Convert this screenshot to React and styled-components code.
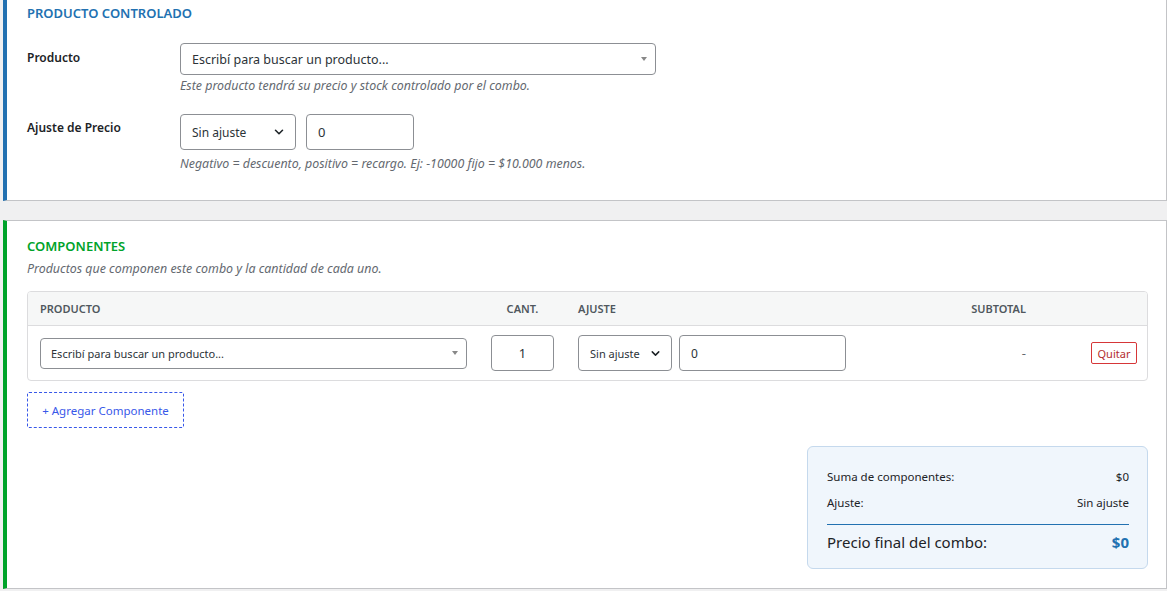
import React from "react";
import styled, { createGlobalStyle } from "styled-components";

const GlobalStyle = createGlobalStyle`
  body {
    margin: 0;
    background: #f0f0f1;
    font-family: "Segoe UI", "Noto Sans", "Open Sans", sans-serif;
    font-size: 13px;
    color: #1d2327;
  }
`;

const Chevron = ({ size = 14 }) => (
  <svg width={size} height={size} viewBox="0 0 16 16" fill="none">
    <path d="M4 6l4 4 4-4" stroke="#1d2327" strokeWidth="1.8" strokeLinecap="round" strokeLinejoin="round" />
  </svg>
);

const App = () => {
  return (
    <>
      <GlobalStyle />
      <StPage>
        <StPanel $accent="#2271b1" $top>
          <StTitle $color="#2271b1">Producto Controlado</StTitle>

          <StFormRow $mt={21}>
            <StLabel $pt={6}>Producto</StLabel>
            <StField>
              <StSearchBox $width={476} $height={32} $size={12.5}>
                <span>Escribí para buscar un producto...</span>
                <StTriangle />
              </StSearchBox>
              <StHelp $mt={2}>Este producto tendrá su precio y stock controlado por el combo.</StHelp>
            </StField>
          </StFormRow>

          <StFormRow $mt={19}>
            <StLabel $pt={5}>Ajuste de Precio</StLabel>
            <StField>
              <StInline>
                <StSelect $width={116} $height={36} $size={12}>
                  <span>Sin ajuste</span>
                  <Chevron />
                </StSelect>
                <StInput $width={108} $height={36}>0</StInput>
              </StInline>
              <StHelp $mt={5}>Negativo = descuento, positivo = recargo. Ej: -10000 fijo = $10.000 menos.</StHelp>
            </StField>
          </StFormRow>
        </StPanel>

        <StPanel $accent="#00a32a">
          <StTitle $color="#00a32a">Componentes</StTitle>
          <StHelp $mt={5}>Productos que componen este combo y la cantidad de cada uno.</StHelp>

          <StTable>
            <StHeadRow>
              <StHeadCell>Producto</StHeadCell>
              <StHeadCell $align="center">Cant.</StHeadCell>
              <StHeadCell>Ajuste</StHeadCell>
              <StHeadCell $align="right">Subtotal</StHeadCell>
              <StHeadCell />
            </StHeadRow>
            <StBodyRow>
              <StCell>
                <StSearchBox $width={427} $height={31} $size={11} $pl={10}>
                  <span>Escribí para buscar un producto...</span>
                  <StTriangle />
                </StSearchBox>
              </StCell>
              <StCell $align="center">
                <StInput $width={63} $height={36} $center>1</StInput>
              </StCell>
              <StCell>
                <StInline $gap={7}>
                  <StSelect $width={94} $height={36} $size={11} $pl={11}>
                    <span>Sin ajuste</span>
                    <Chevron size={13} />
                  </StSelect>
                  <StInput $width={167} $height={36} $size={12}>0</StInput>
                </StInline>
              </StCell>
              <StCell $align="right">
                <StDash>-</StDash>
              </StCell>
              <StCell $align="right" $pr={10}>
                <StRemoveButton type="button">Quitar</StRemoveButton>
              </StCell>
            </StBodyRow>
          </StTable>

          <StAddButton type="button">+ Agregar Componente</StAddButton>

          <StSummaryWrap>
            <StSummary>
              <StSummaryRow>
                <span>Suma de componentes:</span>
                <span>$0</span>
              </StSummaryRow>
              <StSummaryRow>
                <span>Ajuste:</span>
                <span>Sin ajuste</span>
              </StSummaryRow>
              <StSummaryTotal>
                <span>Precio final del combo:</span>
                <StTotalValue>$0</StTotalValue>
              </StSummaryTotal>
            </StSummary>
          </StSummaryWrap>
        </StPanel>
      </StPage>
    </>
  );
};

export default App;

const StPage = styled.div`
  display: flex;
  flex-direction: column;
  gap: 19px;
  padding-left: 3px;
  height: 591px;
  overflow: hidden;
  box-sizing: border-box;
`;

const StPanel = styled.section`
  background: #ffffff;
  border: 1px solid #c3c4c7;
  border-left: 4px solid ${(p) => p.$accent};
  border-top-width: ${(p) => (p.$top ? "0" : "1px")};
  padding: ${(p) => (p.$top ? "4px 18px 27px 20px" : "16px 18px 19px 20px")};
  display: flex;
  flex-direction: column;
`;

const StTitle = styled.h2`
  margin: 0;
  font-size: 13px;
  line-height: 18px;
  font-weight: 600;
  text-transform: uppercase;
  color: ${(p) => p.$color};
`;

const StFormRow = styled.div`
  display: flex;
  margin-top: ${(p) => p.$mt}px;
`;

const StLabel = styled.label`
  width: 153px;
  flex-shrink: 0;
  padding-top: ${(p) => p.$pt}px;
  font-weight: 600;
  font-size: 12px;
  line-height: 18px;
  color: #1d2327;
`;

const StField = styled.div`
  display: flex;
  flex-direction: column;
`;

const StHelp = styled.p`
  margin: ${(p) => p.$mt}px 0 0;
  font-size: 12.4px;
  line-height: 18px;
  font-style: italic;
  color: #646970;
`;

const StInline = styled.div`
  display: flex;
  align-items: center;
  gap: ${(p) => p.$gap ?? 10}px;
`;

const StSearchBox = styled.div`
  box-sizing: border-box;
  width: ${(p) => p.$width}px;
  height: ${(p) => p.$height}px;
  border: 1px solid #8c8f94;
  border-radius: 4px;
  background: #fff;
  display: flex;
  align-items: center;
  justify-content: space-between;
  padding: 0 8px 0 ${(p) => p.$pl ?? 11}px;
  font-size: ${(p) => p.$size ?? 13}px;
  color: #2c3338;
`;

const StTriangle = styled.span`
  width: 0;
  height: 0;
  border-left: 3px solid transparent;
  border-right: 3px solid transparent;
  border-top: 4px solid #888;
`;

const StSelect = styled.div`
  box-sizing: border-box;
  width: ${(p) => p.$width}px;
  height: ${(p) => p.$height}px;
  border: 1px solid #8c8f94;
  border-radius: 4px;
  background: #fff;
  display: flex;
  align-items: center;
  justify-content: space-between;
  padding: 0 9px 0 ${(p) => p.$pl ?? 11}px;
  font-size: ${(p) => p.$size ?? 13}px;
  color: #2c3338;
`;

const StInput = styled.div`
  box-sizing: border-box;
  width: ${(p) => p.$width}px;
  height: ${(p) => p.$height}px;
  border: 1px solid #8c8f94;
  border-radius: 4px;
  background: #fff;
  display: flex;
  align-items: center;
  justify-content: ${(p) => (p.$center ? "center" : "flex-start")};
  padding: 0 11px;
  font-size: ${(p) => p.$size ?? 13}px;
  color: #2c3338;
`;

const cols = "451px 87px 300px 172px 1fr";

const StTable = styled.div`
  margin-top: 13px;
  border: 1px solid #dcdcde;
  border-radius: 4px;
  overflow: hidden;
`;

const StHeadRow = styled.div`
  display: grid;
  grid-template-columns: ${cols};
  height: 33px;
  align-items: center;
  background: #f6f7f7;
  border-bottom: 1px solid #dcdcde;
`;

const StHeadCell = styled.div`
  padding: 0 12px;
  font-size: 11px;
  font-weight: 600;
  text-transform: uppercase;
  color: #50575e;
  text-align: ${(p) => p.$align ?? "left"};
`;

const StBodyRow = styled.div`
  display: grid;
  grid-template-columns: ${cols};
  align-items: center;
  padding: 9px 0 9px;
`;

const StCell = styled.div`
  display: flex;
  justify-content: ${(p) =>
    p.$align === "center" ? "center" : p.$align === "right" ? "flex-end" : "flex-start"};
  padding: 0 ${(p) => p.$pr ?? 12}px 0 12px;
`;

const StDash = styled.span`
  color: #646970;
  font-size: 13px;
`;

const StRemoveButton = styled.button`
  border: 1px solid #d63638;
  background: #fff;
  color: #b32d2e;
  border-radius: 2px;
  height: 22px;
  width: 46px;
  padding: 0;
  font-family: inherit;
  font-size: 11px;
  cursor: pointer;
`;

const StAddButton = styled.button`
  align-self: flex-start;
  margin-top: 11px;
  width: 157px;
  height: 36px;
  border: 1px dashed #3858e9;
  border-radius: 2px;
  background: #fff;
  color: #3858e9;
  font-family: inherit;
  font-size: 11.5px;
  cursor: pointer;
`;

const StSummaryWrap = styled.div`
  display: flex;
  justify-content: flex-end;
  margin-top: 18px;
`;

const StSummary = styled.div`
  box-sizing: border-box;
  width: 341px;
  background: #f0f6fc;
  border: 1px solid #c5d9ed;
  border-radius: 6px;
  padding: 17px 18px 15px 19px;
`;

const StSummaryRow = styled.div`
  display: flex;
  justify-content: space-between;
  padding: 4px 0;
  font-size: 11.5px;
  line-height: 18px;
  color: #1d2327;
`;

const StSummaryTotal = styled.div`
  display: flex;
  justify-content: space-between;
  align-items: center;
  margin-top: 8px;
  padding-top: 6px;
  border-top: 1px solid #2271b1;
  font-size: 15px;
  line-height: 22px;
  color: #1d2327;
`;

const StTotalValue = styled.span`
  font-weight: 700;
  color: #2271b1;
`;
